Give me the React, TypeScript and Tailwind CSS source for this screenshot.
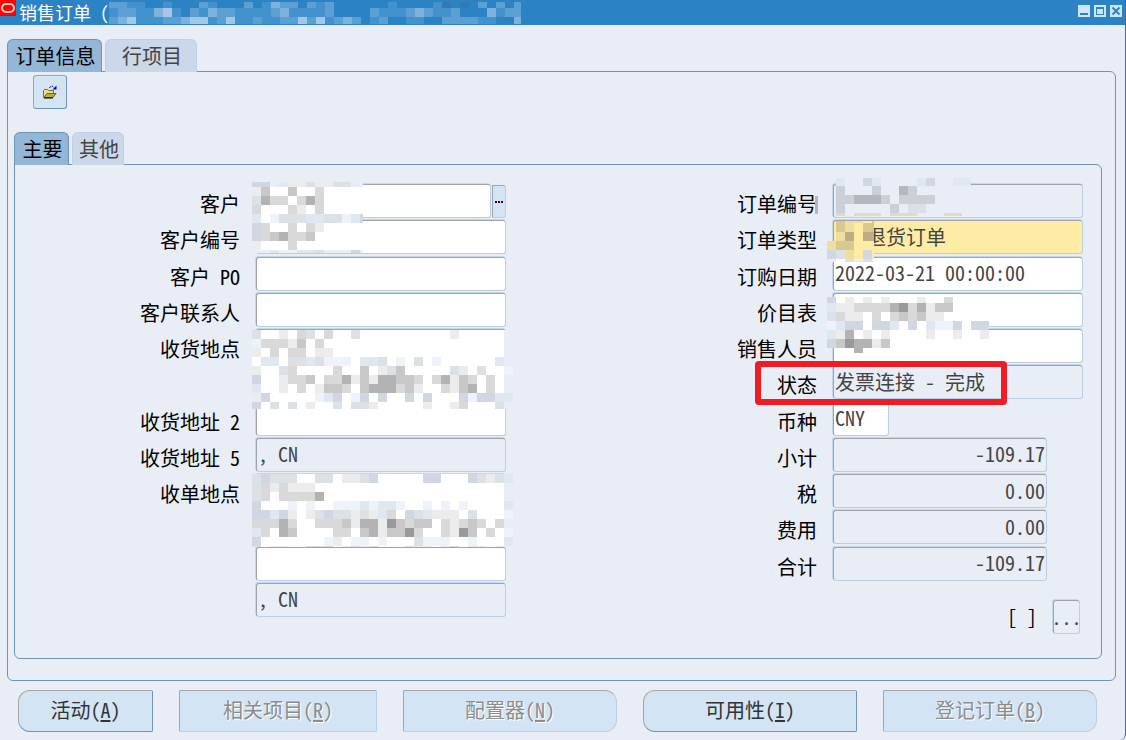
import type { ReactNode } from "react";
import clsx from "clsx";

const palette: Record<string, string> = {
  w: "#ffffff",
  b: "#e9eef6",
  l: "#eef2fa",
  m: "#dfe7f1",
  n: "#d0d7e2",
  g: "#dce1e6",
  "1": "#ececec",
  "2": "#d9d9d9",
  "3": "#c8c8c8",
  "4": "#b3b3b3",
  "5": "#999999",
  a: "#cbcfd6",
  c: "#b4b7bd",
  e: "#dcdfe5",
  f: "#e0dbc4",
  Y: "#ffeca4",
  y: "#f0de9e",
  z: "#d9c98f",
  x: "#bcae82",
};

const title_palette: Record<string, string> = {
  "1": "#4391cd",
  "2": "#5b9fd3",
  "3": "#7cb2dc",
  "4": "#a4c7e5",
  d: "#3379b8",
};

const title_rows = [
  "2211..1...21...2.1322.212......1....1d.d.2.2.2",
  "12211341.2132211112311112....2111232112...3122",
  "2341112234412411211224241232.12..11..222211..33",
];

const customer_rows = [
  "nnbm11g1bggbb",
  "13ww3ww2wwwww",
  "g422w242wwwww",
  "2www21w2wwwww",
  "mwlgggmmgglmn",
  "n2ww2w21wwwww",
  "n234223wwwwww",
  "1www2wwwwwwww",
  "bbmllmmgbbbnb",
];

const ship_rows = [
  "gww1w2gw2wwgwwwwwwwwww1wwwwwb",
  "l22213w2wwwwwwwwwwwwwwwwwwwwb",
  "1w2w22w11wwwwwwwwwwwwwwwwwwwb",
  "wmmwggmglllwmmgwlwgwlwwwwwwmb",
  "1wwg2wwww2ww3w1g3wwwwwg1wgwwl",
  "nww1223w22413144332w24132w2wb",
  "mww1w2w1332w3444231ww2134w2wb",
  "1nwwwwwlmnwlnwnwwnwnwwwnlnnmm",
  "nwgwgw1wwgwgg1wwwww1ww12wwwgb",
];

const bill_rows = [
  "gngggwwggw11gnwwwwwnnwwwng1gm",
  "g212111wwwwwwwwwwwwwwwwwwwwwb",
  "g2w22224wwwwwwwwwwwwwwwwwwwwb",
  "nwwwlwlwwlllmlmmlwwlwlwlwwwwm",
  "nnmn1w1gngg1g1m2wngm111wgwwwl",
  "22242ww2223144153233w21232w2b",
  "m2w43wwww22w3413352ww2153w2wl",
  "nwwwwwwwl1wllwlwwwglllwwlwwwm",
  "gw11ww222w1g12wwwg11w12w11w1b",
];

const number_rows = [
  "mbbnmbbbbmnbbmm",
  "abbbabbcabbbbbb",
  "aacccabaaaabbbb",
  "abbbbbabeebbbbb",
  "fbfffbfffbbbffb",
];

const type_rows = [".zyyYz", ".zyYzz", ".yxYxx", "yzzYYY", "ngyYnY", "bwgbgb"];

const price_rows = [
  "nw1w1w1www1ww2wwww",
  "m1122224524133wwww",
  "g211w2w232311wwwww",
  "lmnnwnnmwnwmllnwnn",
  "m14w1w1wwww1ww1ww1",
  "n354413wwwwwwwwwww",
  ".ww4wwwwwwwwwwwwww",
];

type MosaicProps = {
  rows: string[];
  width: number;
  height: number;
  shift?: number;
  colors?: Record<string, string>;
  className?: string;
};

// censored patch made of 9px blocks, shift cuts the top of the first row
const Mosaic = ({ rows, width, height, shift = 0, colors = palette, className }: MosaicProps) => (
  <svg
    width={width}
    height={height}
    viewBox={`0 ${shift} ${width} ${height}`}
    shapeRendering="crispEdges"
    aria-hidden="true"
    className={className}
  >
    {rows.map((row, y) =>
      row
        .split("")
        .map((c, x) => colors[c] && <rect key={`${x}-${y}`} x={x * 9} y={y * 9} width={9} height={9} fill={colors[c]} />),
    )}
  </svg>
);

const Tab = ($: { active?: boolean; className?: string; children: ReactNode }) => (
  <button
    type="button"
    role="tab"
    aria-selected={!!$.active}
    className={clsx(
      "rounded-t-md border border-b-0 pl-0.5 text-center leading-8",
      $.active ? "border-[#6f93b5] bg-[#94b7d8] text-black" : "border-[#bfd1e6] bg-[#cbd8e9] text-[#444]",
      $.className,
    )}
  >
    {$.children}
  </button>
);

type FieldProps = {
  id: string;
  label?: string;
  value?: string;
  readOnly?: boolean;
  width?: string;
  bg?: string;
  className?: string;
  children?: ReactNode;
};

const Field = ({ id, label, value = "", readOnly, width = "w-[250px]", bg, className, children }: FieldProps) => (
  <div className="flex items-start gap-4">
    <label htmlFor={id} className="flex-1 pt-1 text-right leading-8 text-black">
      {label}
    </label>
    <div className="relative flex w-[250px]">
      <input
        id={id}
        defaultValue={value}
        readOnly={readOnly}
        className={clsx(
          "h-[34px] rounded-[3px] border border-t-[#9fa4ab] border-l-[#9fa4ab] border-r-[#bccee4] border-b-[#bccee4] px-px pb-0.5 text-[#444] shadow-[-1px_-1px_0_#c5d7ea] outline-none",
          bg ?? (readOnly ? "bg-[#e9eef6]" : "bg-white"),
          width,
          className,
        )}
      />
      {children}
    </div>
  </div>
);

const actions = [
  { name: "活动", hotkey: "A", shape: "rounded-l-xl rounded-r-xs" },
  { name: "相关项目", hotkey: "R", shape: "rounded-xs", disabled: true },
  { name: "配置器", hotkey: "N", shape: "rounded-r-xl rounded-l-xs", disabled: true },
  { name: "可用性", hotkey: "I", shape: "rounded-l-xl rounded-r-xs" },
  { name: "登记订单", hotkey: "B", shape: "rounded-r-xl rounded-l-xs", disabled: true },
];

const TitleBar = () => (
  <header className="flex h-[25px] items-start bg-[#2b83c4] text-lg text-white">
    <svg width="16" height="16" viewBox="0 0 16 16" aria-hidden="true">
      <rect width="16" height="16" fill="#ff0000" />
      <rect x="2" y="4" width="12" height="8" rx="4" fill="none" stroke="#ffc9c9" strokeWidth="2" />
    </svg>
    <h1 className="ml-[3px] leading-6 whitespace-pre">销售订单 (</h1>
    <Mosaic rows={title_rows} width={412} height={22} shift={3} colors={title_palette} className="mt-[2px]" />
    <div className="mt-[5px] mr-[3px] ml-auto flex gap-1">
      <button type="button" aria-label="最小化" className="size-3 bg-[#cfe6f7]">
        <svg width="12" height="12" aria-hidden="true">
          <rect x="2" y="8" width="8" height="2" fill="#2b83c4" />
        </svg>
      </button>
      <button type="button" aria-label="最大化" className="size-3 bg-[#cfe6f7]">
        <svg width="12" height="12" shapeRendering="crispEdges" aria-hidden="true">
          <rect x="2.5" y="2.5" width="7" height="7" fill="none" stroke="#2b83c4" />
          <rect x="2" y="2" width="8" height="2" fill="#2b83c4" />
        </svg>
      </button>
      <button type="button" aria-label="关闭" className="size-3 bg-[#cfe6f7]">
        <svg width="12" height="12" aria-hidden="true">
          <path d="M2.5 2.5l7 7M9.5 2.5l-7 7" stroke="#2b83c4" strokeWidth="2" />
        </svg>
      </button>
    </div>
  </header>
);

const FolderIcon = () => (
  <svg width="14" height="14" viewBox="0 0 14 14" aria-hidden="true">
    <path d="M.5 12.5v-7l1-1h3l1 1h5v3" fill="#e6e08a" stroke="#77701c" />
    <path d="M1 12.500l3-4h9l-3 4z" fill="#b5ae3c" stroke="#6a6414" />
    <path d="M1 13h9" stroke="#000" />
    <path d="M6.500 3c1-2.500 3.500-2.500 4.500 0" fill="none" stroke="#0000e8" strokeDasharray="2 1" />
    <path d="M13.500 .5v4h-4z" fill="#0000ff" />
  </svg>
);

const LeftFields = () => (
  <div className="grid h-[435px] w-[491px] grid-rows-12">
    <Field id="customer" label="客户" width="w-[235px]">
      <button
        type="button"
        aria-label="选择客户"
        className="mt-px ml-px flex h-[33px] w-[14px] items-center justify-center rounded-r-[3px] border border-t-[#9fa4ab] border-l-[#9fa4ab] border-r-[#bccee4] border-b-[#bccee4] bg-[#d3e5f5]"
      >
        <svg width="8" height="2" aria-hidden="true">
          <path d="M0 1h2M3 1h2M6 1h2" stroke="#300" strokeWidth="2" />
        </svg>
      </button>
      <Mosaic rows={customer_rows} width={111} height={71} shift={4} className="absolute -top-0.5 -left-1 z-10" />
    </Field>
    <Field id="customer-no" label="客户编号" />
    <Field id="customer-po" label="客户 PO" />
    <Field id="contact" label="客户联系人" />
    <Field id="ship-to" label="收货地点">
      <Mosaic rows={ship_rows} width={261} height={79} className="absolute top-px -left-1 z-10" />
    </Field>
    <Field id="ship-address-1" />
    <Field id="ship-address-2" label="收货地址 2" />
    <Field id="ship-address-5" label="收货地址 5" value=", CN" readOnly />
    <Field id="bill-to" label="收单地点">
      <Mosaic rows={bill_rows} width={261} height={73} className="absolute top-0 -left-1 z-10" />
    </Field>
    <Field id="bill-address-1" />
    <Field id="bill-address-2" />
    <Field id="bill-address-5" value=", CN" readOnly />
  </div>
);

const RightFields = () => (
  <div className="w-[346px]">
    <div className="grid h-[399px] grid-rows-11">
      <Field id="order-no" label="订单编号" readOnly>
        <Mosaic rows={number_rows} width={135} height={38} shift={1} className="absolute -top-1.5 left-[3px]" />
        <Mosaic rows={["c", "c"]} width={3} height={18} className="absolute top-3 -left-[18px]" />
      </Field>
      <Field id="order-type" label="订单类型" value="退货订单" bg="bg-[#ffeca4]" className="pl-8">
        <Mosaic rows={type_rows} width={47} height={41} shift={7} className="absolute top-px -left-1.5 z-10" />
      </Field>
      <Field id="order-date" label="订购日期" value="2022-03-21 00:00:00" />
      <Field id="price-list" label="价目表">
        <Mosaic rows={price_rows} width={162} height={56} shift={3} className="absolute top-1 -left-1.5 z-10" />
      </Field>
      <Field id="salesperson" label="销售人员" />
      <Field id="status" label="状态" value="发票连接 - 完成" readOnly>
        <div className="pointer-events-none absolute -top-1 -left-[78px] z-10 h-11 w-[252px] rounded border-[6px] border-[#ee1c25]" />
      </Field>
      <Field id="currency" label="币种" value="CNY" width="w-14" />
      <Field id="subtotal" label="小计" value="-109.17" width="w-[214px]" className="text-right" readOnly />
      <Field id="tax" label="税" value="0.00" width="w-[214px]" className="text-right" readOnly />
      <Field id="charges" label="费用" value="0.00" width="w-[214px]" className="text-right" readOnly />
      <Field id="total" label="合计" value="-109.17" width="w-[214px]" className="text-right" readOnly />
    </div>
    <div className="mt-[17px] mr-[3px] flex items-center justify-end gap-4">
      <span className="text-black">[ ]</span>
      <button
        type="button"
        className="h-[34px] w-[27px] rounded-[3px] border border-t-[#9fa4ab] border-l-[#9fa4ab] border-r-[#bccee4] border-b-[#bccee4] text-[#444] shadow-[-1px_-1px_0_#c5d7ea]"
      >
        <span className="-mx-1">...</span>
      </button>
    </div>
  </div>
);

export default function App() {
  return (
    <div className="flex min-h-screen flex-col bg-[#e9eef6] font-['Noto_Sans_Mono_CJK_SC','Noto_Sans_CJK_SC',monospace] text-xl font-light">
      <div className="flex flex-1 flex-col rounded-br-md border-r border-[#4a6a90]">
        <TitleBar />
        <main className="px-[7px] pt-3.5 pr-[9px]">
          <div role="tablist" className="flex gap-[3px]">
            <Tab active className="w-[95px]">订单信息</Tab>
            <Tab className="w-[92px]">行项目</Tab>
          </div>
          <section className="-mt-px h-[610px] rounded-md rounded-tl-none border border-[#6f93b5] px-1.5 pt-[3px] pr-[13px]">
            <button
              type="button"
              aria-label="打开"
              className="ml-[19px] flex size-[34px] items-center justify-center rounded-[3px] border border-t-[#a5a5a5] border-l-[#a5a5a5] border-r-[#6f93b5] border-b-[#6f93b5] bg-[#d3e5f5]"
            >
              <FolderIcon />
            </button>
            <div role="tablist" className="mt-[23px] flex gap-[3px]">
              <Tab active className="w-[55px]">主要</Tab>
              <Tab className="w-[52px]">其他</Tab>
            </div>
            <form className="-mt-px flex h-[495px] justify-between rounded-md rounded-tl-none border border-[#6f93b5] pt-[19px] pr-[18px]">
              <LeftFields />
              <RightFields />
            </form>
          </section>
        </main>
        <footer className="mt-[9px] grid grid-cols-[135fr_198fr_214fr_214fr_214fr] gap-[26px] pr-7 pl-[18px]">
          {actions.map((v) => (
            <button
              key={v.hotkey}
              type="button"
              disabled={v.disabled}
              className={clsx(
                "h-[42px] border border-t-[#a5a5a5] border-l-[#a5a5a5] bg-[#d3e5f5] pb-0.5",
                v.disabled
                  ? "border-r-[#bccee4] border-b-[#bccee4] text-[#8c8c8c] [text-shadow:1px_1px_0_#fff]"
                  : "border-r-[#6f93b5] border-b-[#6f93b5] text-[#333]",
                v.shape,
              )}
            >
              {v.name}(<u className="underline-offset-2">{v.hotkey}</u>)
            </button>
          ))}
        </footer>
      </div>
    </div>
  );
}
